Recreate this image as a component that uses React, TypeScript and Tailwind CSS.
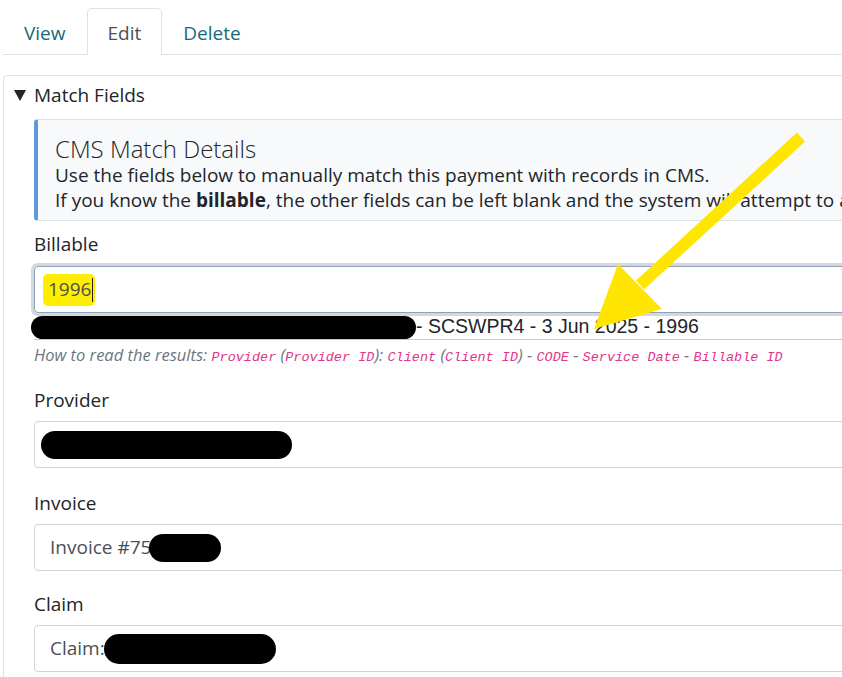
import React from 'react';

const Tab = ({ label, active }: { label: string; active?: boolean }) => (
  <div
    className={`-mb-px h-[47px] pt-[3px] px-[20px] flex items-center border rounded-t-[5px] ${
      active ? 'border-[#dee2e6] border-b-white bg-white text-[#495057]' : 'border-transparent text-[#17697a]'
    }`}
  >
    {label}
  </div>
);

const Blob = ({ className }: { className: string }) => (
  <span className={`inline-block bg-black rounded-full ${className}`} />
);

const Field = ({ label, children, className = '' }: { label: string; children: React.ReactNode; className?: string }) => (
  <div className={className}>
    <div className="leading-[27px]">{label}</div>
    <div className="mt-[7px] h-[47px] flex items-center border border-[#ced4da] rounded-[4px] px-[15px] text-[#495057]">
      {children}
    </div>
  </div>
);

const Code = ({ children }: { children: React.ReactNode }) => (
  <span className="font-['Liberation_Mono',monospace] text-[13.5px] text-[#e0358a]">{children}</span>
);

export default function App() {
  return (
    <div className="relative w-[842px] h-[677px] overflow-hidden bg-white font-['Open_Sans',sans-serif] text-[19px] text-[#212529]">
      {/* Tabs */}
      <div className="ml-[3px] w-[900px] pt-2 flex border-b border-[#dee2e6]">
        <Tab label="View" />
        <Tab label="Edit" active />
        <Tab label="Delete" />
      </div>

      {/* Match panel */}
      <div className="ml-[3px] mt-[20px] w-[900px] h-[700px] border border-[#dee2e6] rounded-[4px]">
        <div className="pl-[10px] pt-[6px] leading-[27px] flex items-center">
          <svg width="12" height="11" viewBox="0 0 12 11" className="mr-[8px]">
            <polygon points="0,0 12,0 6,11" fill="#212529" />
          </svg>
          <span>Match Fields</span>
        </div>

        <div className="pl-[30px] pr-[4px] mt-[10px]">
          {/* Info callout */}
          <div className="border border-[#dee2e6] border-l-4 border-l-[#5b9bd7] bg-[#f8f9fa] rounded-[4px] pl-[17px] pt-[14px] pb-[7px]">
            <div className="text-[24px] font-light leading-[29px]">CMS Match Details</div>
            <div className="leading-[25px] whitespace-nowrap">Use the fields below to manually match this payment with records in CMS.</div>
            <div className="leading-[25px] whitespace-nowrap">
              If you know the <b>billable</b>, the other fields can be left blank and the system will attempt to auto-fill them.
            </div>
          </div>

          {/* Billable with autocomplete */}
          <div className="mt-[10px] leading-[27px]">Billable</div>
          <div className="mt-[8px] h-[47px] flex items-center border border-[#8fa2b6] shadow-[0_0_0_3px_#d3d8de] rounded-[4px] px-[8px] text-[#495057]">
            <span className="h-[32px] flex items-center bg-[#ffee00] rounded-[5px] pl-[5px] pr-[2px]">
              1996<span className="inline-block w-px h-[24px] bg-[#222] ml-px" />
            </span>
          </div>
          <div className="h-[27px] flex items-end border-b border-[#c6c8cc] whitespace-nowrap">
            <Blob className="-ml-[3px] w-[385px] h-[23px]" />
            <span className="font-['Liberation_Sans',Arial,sans-serif] text-[19.5px] leading-[24px] pb-[1px]">- SCSWPR4 - 3 Jun 2025 - 1996</span>
          </div>
          <div className="mt-[5px] leading-[20px] text-[16.5px] italic text-[#6c757d] whitespace-nowrap">
            How to read the results: <Code>Provider</Code> (<Code>Provider ID</Code>): <Code>Client</Code> (<Code>Client ID</Code>) - <Code>CODE</Code> - <Code>Service Date</Code> - <Code>Billable ID</Code>
          </div>

          <Field label="Provider" className="mt-[19px]">
            <Blob className="-ml-[9px] w-[251px] h-[28px]" />
          </Field>
          <Field label="Invoice" className="mt-[22px]">
            Invoice #75<Blob className="-ml-[2px] w-[72px] h-[28px]" />
          </Field>
          <Field label="Claim" className="mt-[20px]">
            Claim:<Blob className="-ml-[1px] w-[172px] h-[30px]" />
          </Field>
        </div>
      </div>

      {/* Annotation arrow */}
      <svg className="absolute inset-0 pointer-events-none" width="842" height="677" viewBox="0 0 842 677">
        <line x1="801" y1="137" x2="640" y2="285" stroke="#ffe600" strokeWidth="12" />
        <polygon points="618,264 662,309 594,329" fill="#ffe600" />
      </svg>
    </div>
  );
}
